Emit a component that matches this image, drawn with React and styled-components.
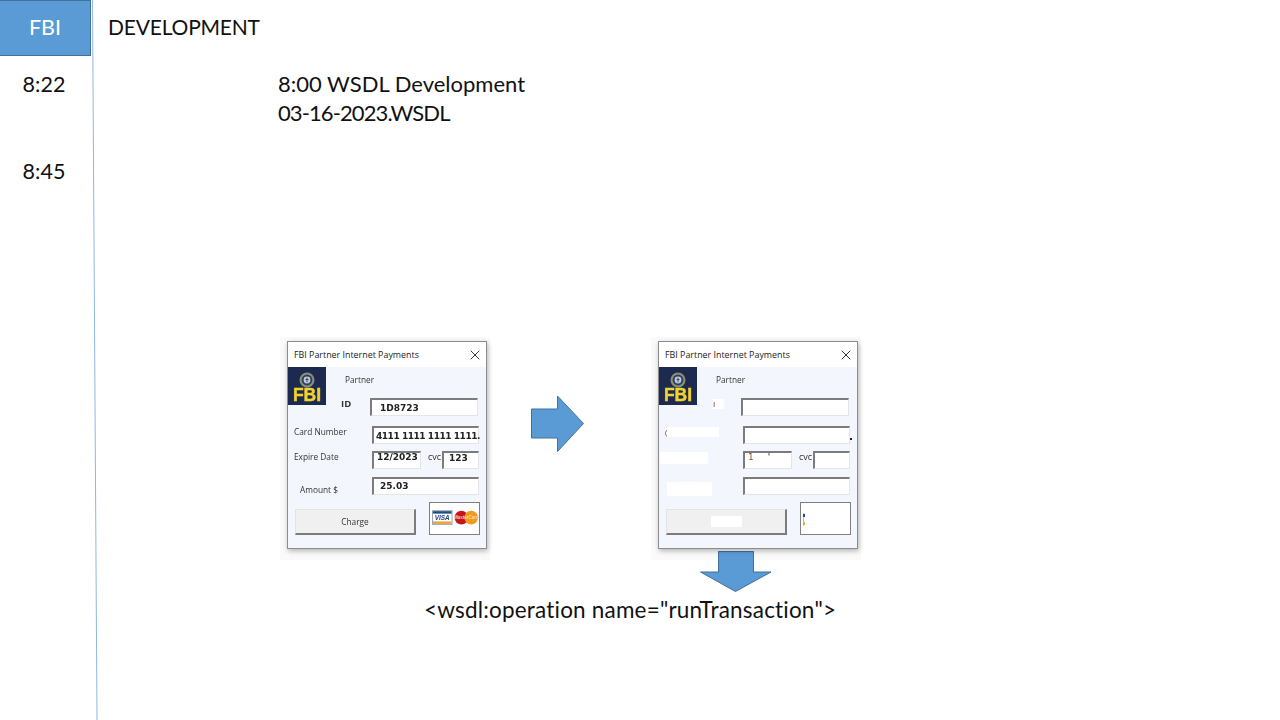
import React from 'react'
import styled, { createGlobalStyle } from 'styled-components'
import { X } from 'lucide-react'

const GlobalStyle = createGlobalStyle`
  html, body {
    margin: 0;
    background: #ffffff;
    overflow: hidden;
  }
  * {
    box-sizing: border-box;
  }
`

const Slide = styled.div`
  position: relative;
  display: flex;
  width: 1280px;
  height: 720px;
  font-family: "Lato", "Open Sans", sans-serif;
  font-variant-ligatures: none;
  color: #111111;
`

// the slide's divider leans a little to the right
const Divider = styled.svg`
  position: absolute;
  left: 0;
  top: 0;
  pointer-events: none;
`

const Sidebar = styled.div`
  width: 92px;
  flex: none;
`

const Tab = styled.div`
  height: 56px;
  margin-right: 1px;
  display: flex;
  align-items: center;
  justify-content: center;
  padding-bottom: 3px;
  background: #5b9bd5;
  border: 1px solid #41719c;
  border-left: 0;
  color: #ffffff;
  font-size: 21.5px;
`

const Time = styled.div`
  height: 87px;
  font-size: 21.5px;
  line-height: 30px;
  text-align: center;
  padding-right: 4px;
`

const TimeList = styled.div`
  padding-top: 13px;
`

const Main = styled.div`
  flex: 1;
  display: flex;
  flex-direction: column;
`

const Heading = styled.div`
  height: 56px;
  padding-left: 16px;
  font-size: 21px;
  letter-spacing: -0.2px;
  line-height: 54px;
`

const Notes = styled.div`
  margin-left: 186px;
  margin-top: 13px;
`

const NoteLine = styled.div`
  font-size: 22px;
  line-height: 29px;
  letter-spacing: ${p => p.$tight || 0}px;
`

const FlowRow = styled.div`
  display: flex;
  align-items: flex-start;
  margin-top: 210px;
  padding-left: 188px;
`

const Arrow = styled.svg`
  display: block;
  flex: none;
  margin: ${p => p.$margin};
`

const Column = styled.div`
  display: flex;
  flex-direction: column;
  align-items: flex-start;
`

const Operation = styled.div`
  margin-left: 332px;
  margin-top: 3px;
  font-size: 22.5px;
  letter-spacing: 0.19px;
  line-height: 30px;
  white-space: nowrap;
`

const Halo = styled.div`
  width: 210px;
  height: 223px;
  padding: 4px 0 0 7px;
  background: #fafafa;
`

const Dialog = styled.div`
  width: 200px;
  height: 208px;
  background: #f3f6fc;
  border: 1px solid #8c8c8c;
  box-shadow: 1px 2px 5px rgba(0, 0, 0, 0.28);
  font-family: "Open Sans", "Liberation Sans", sans-serif;
  font-size: 8.3px;
  color: #333333;
  filter: blur(0.3px);
`

const TitleBar = styled.div`
  height: 25px;
  display: flex;
  align-items: center;
  justify-content: space-between;
  padding: 0 3px 0 6px;
  background: #ffffff;
  font-size: 8.9px;
  color: #222222;
`

const TopRow = styled.div`
  height: 31px;
  display: flex;
  align-items: flex-start;
`

const Logo = styled.div`
  width: 38px;
  height: 38px;
  flex: none;
  display: flex;
  flex-direction: column;
  align-items: center;
  padding-top: 5px;
  background: #1b2a4e;
`

const LogoText = styled.div`
  font-family: "Liberation Sans", sans-serif;
  font-size: 17.5px;
  font-weight: 700;
  line-height: 13px;
  margin-top: 1px;
  color: #f4d22e;
  -webkit-text-stroke: 0.4px #f4d22e;
`

const Partner = styled.div`
  margin: 6px 0 0 19px;
  line-height: 13px;
`

const Row = styled.div`
  display: flex;
  height: 18px;
  margin-top: ${p => p.$top}px;
`

const LabelCell = styled.div`
  width: ${p => p.$width}px;
  flex: none;
  height: 18px;
  display: flex;
  align-items: center;
  padding-left: ${p => p.$x}px;
  margin-top: ${p => p.$shift}px;
  font-weight: ${p => (p.$bold ? 700 : 400)};
  font-size: ${p => (p.$bold ? 9.5 : 8.3)}px;
  white-space: nowrap;
`

// white-out rectangle pasted over a label in the edited copy of the dialog
const Patch = styled.div`
  flex: none;
  width: ${p => p.$w}px;
  height: ${p => p.$h}px;
  background: #ffffff;
  font-size: 8px;
  font-weight: 400;
  line-height: ${p => p.$h}px;
  color: #7a2a2a;
`

const Field = styled.div`
  flex: none;
  width: ${p => p.$w}px;
  height: 18px;
  padding-left: ${p => p.$pad}px;
  background: #ffffff;
  border-top: 2px solid #7c7c7c;
  border-left: 2px solid #7c7c7c;
  border-right: 1px solid #e2e5ea;
  border-bottom: 1px solid #e2e5ea;
  font-family: "DejaVu Sans", sans-serif;
  font-size: 9px;
  font-weight: 700;
  letter-spacing: ${p => p.$tight || 0}px;
  line-height: ${p => p.$line}px;
  color: #222222;
  white-space: nowrap;
`

const Cvc = styled.div`
  flex: none;
  width: 21px;
  padding-left: 7px;
  font-size: 9px;
  line-height: 12px;
`

const Speck = styled.span`
  margin-left: ${p => p.$left || 0}px;
  font-weight: 400;
  color: ${p => p.$color};
`

const OutsideDot = styled.div`
  flex: none;
  width: 2px;
  height: 2px;
  margin-top: 12px;
  background: #222222;
`

const BottomRow = styled.div`
  display: flex;
  align-items: flex-end;
  gap: 13px;
  margin-top: 7px;
  padding-left: 7px;
`

const ChargeButton = styled.div`
  width: 121px;
  height: 26px;
  display: flex;
  align-items: center;
  justify-content: center;
  background: #f0f0f0;
  border-top: 1px solid #e4e4e4;
  border-left: 1px solid #e4e4e4;
  border-right: 2px solid #7c7c7c;
  border-bottom: 2px solid #7c7c7c;
`

const CardsBox = styled.div`
  width: 51px;
  height: 33px;
  display: flex;
  align-items: center;
  padding-left: 2px;
  background: #ffffff;
  border: 1px solid #808080;
`

const Seal = () => (
  <svg width="16" height="16" viewBox="0 0 16 16">
    <circle cx="8" cy="8" r="7.5" fill="#8f8f6f" />
    <circle cx="8" cy="8" r="5.4" fill="#25406f" />
    <circle cx="8" cy="8" r="3.4" fill="#c9cdd2" />
    <path d="M8 5.6v4.8M6.4 7.5h3.2" stroke="#27406b" strokeWidth="0.9" />
  </svg>
)

const CardLogos = () => (
  <svg width="48" height="24" viewBox="0 0 48 24">
    <rect x="0.5" y="3.5" width="20" height="14" fill="#ffffff" stroke="#9aa3ad" />
    <rect x="1" y="4" width="19" height="2.5" fill="#1c4c8c" />
    <rect x="1" y="14.5" width="19" height="2.5" fill="#e8a33a" />
    <text x="10.5" y="13" textAnchor="middle" fontFamily="Liberation Sans" fontSize="6.5" fontWeight="700" fontStyle="italic" fill="#1c3f7c">VISA</text>
    <circle cx="30" cy="10.5" r="7" fill="#c4161c" />
    <circle cx="40" cy="10.5" r="7" fill="#f19a20" />
    <text x="35" y="12.5" textAnchor="middle" fontFamily="Liberation Sans" fontSize="4.6" fontWeight="700" fill="#f7d9b0">MasterCard</text>
  </svg>
)

const CardSpecks = () => (
  <svg width="6" height="24" viewBox="0 0 6 24">
    <path d="M0.5 6v13" stroke="#b8c0c8" strokeWidth="1" />
    <rect x="0" y="7" width="2" height="3" fill="#1c4c8c" />
    <rect x="0" y="15" width="2" height="3" fill="#e8a33a" />
  </svg>
)

function PaymentDialog({ redacted }) {
  return (
    <Halo>
      <Dialog>
        <TitleBar>
          FBI Partner Internet Payments
          <X size={16} strokeWidth={1.5} color="#333333" />
        </TitleBar>
        <TopRow>
          <Logo>
            <Seal />
            <LogoText>FBI</LogoText>
          </Logo>
          <Partner>Partner</Partner>
        </TopRow>
        <Row $top={0}>
          <LabelCell $width={82} $x={redacted ? 54 : 53} $shift={redacted ? -3 : -4} $bold>
            {redacted ? <Patch $w={11} $h={10}>I</Patch> : 'ID'}
          </LabelCell>
          <Field $w={108} $pad={8} $line={16}>{redacted ? '' : '1D8723'}</Field>
        </Row>
        <Row $top={10}>
          <LabelCell $width={84} $x={6} $shift={redacted ? -3 : -4}>
            {redacted ? <Patch $w={54} $h={10}>(</Patch> : 'Card Number'}
          </LabelCell>
          <Field $w={107} $pad={2} $line={17} $tight={-0.45}>{redacted ? '' : '4111 1111 1111 1111.'}</Field>
          {redacted && <OutsideDot />}
        </Row>
        <Row $top={7}>
          <LabelCell $width={84} $x={redacted ? 1 : 6} $shift={redacted ? -2 : -4}>
            {redacted ? <Patch $w={48} $h={12} /> : 'Expire Date'}
          </LabelCell>
          <Field $w={49} $pad={3} $line={9}>
            {redacted ? <Speck $color="#8a5a1a">1<Speck $left={14} $color="#222222">'</Speck></Speck> : '12/2023'}
          </Field>
          <Cvc>cvc</Cvc>
          <Field $w={37} $pad={5} $line={10}>{redacted ? '' : '123'}</Field>
        </Row>
        <Row $top={8}>
          <LabelCell $width={84} $x={redacted ? 8 : 12} $shift={3}>
            {redacted ? <Patch $w={45} $h={14} /> : 'Amount $'}
          </LabelCell>
          <Field $w={107} $pad={6} $line={14}>{redacted ? '' : '25.03'}</Field>
        </Row>
        <BottomRow>
          <ChargeButton>
            {redacted ? <Patch $w={31} $h={11} /> : 'Charge'}
          </ChargeButton>
          <CardsBox>
            {redacted ? <CardSpecks /> : <CardLogos />}
          </CardsBox>
        </BottomRow>
      </Dialog>
    </Halo>
  )
}

function App() {
  return (
    <Slide>
      <GlobalStyle />
      <Sidebar>
        <Tab>FBI</Tab>
        <TimeList>
          <Time>8:22</Time>
          <Time>8:45</Time>
        </TimeList>
      </Sidebar>
      <Main>
        <Heading>DEVELOPMENT</Heading>
        <Notes>
          <NoteLine>8:00 WSDL Development</NoteLine>
          <NoteLine $tight={-0.9}>03-16-2023.WSDL</NoteLine>
        </Notes>
        <FlowRow>
          <PaymentDialog />
          <Arrow $margin="58px 67px 0 41px" width="53" height="58" viewBox="0 0 53 58">
            <path d="M0.5 14h26V1L52.5 28.5 26.5 56.5V43h-26z" fill="#5b9bd5" stroke="#41719c" />
          </Arrow>
          <Column>
            <PaymentDialog redacted />
            <Arrow $margin="-9px 0 0 49px" width="72" height="41" viewBox="0 0 72 41">
              <path d="M18.5 0.5h35V21H71L35.5 40.5 0.5 21H18.5z" fill="#5b9bd5" stroke="#41719c" />
            </Arrow>
          </Column>
        </FlowRow>
        <Operation>{'<wsdl:operation name="runTransaction">'}</Operation>
      </Main>
      <Divider width="100" height="720" viewBox="0 0 100 720">
        <line x1="92.5" y1="0" x2="97" y2="720" stroke="#8db7e2" strokeWidth="1" />
      </Divider>
    </Slide>
  )
}

export default App
